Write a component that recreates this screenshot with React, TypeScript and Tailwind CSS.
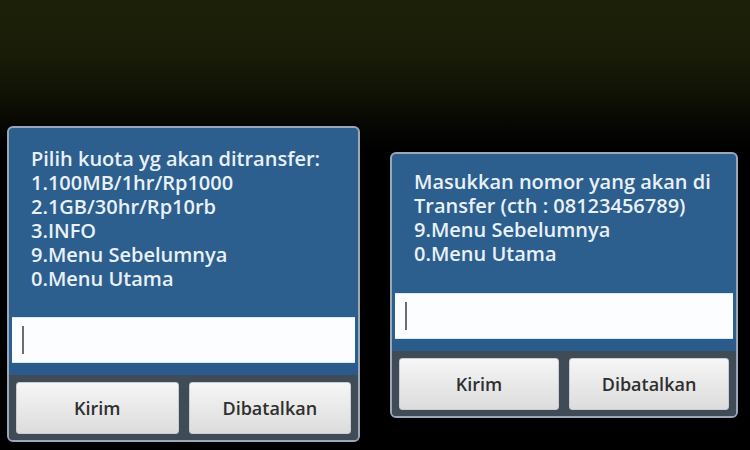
import React from "react";

type UssdDialogProps = {
  lines: string[];
  className?: string;
  textPadding: string;
  inputGap: string;
};

function UssdDialog({ lines, className, textPadding, inputGap }: UssdDialogProps) {
  return (
    <div
      className={`flex flex-col overflow-hidden rounded-[6px] border-2 border-[#9aa9ba] bg-[#2c5e8e] ${className ?? ""}`}
    >
      {/* message text */}
      <div className={`px-[22px] ${textPadding} ${inputGap} text-[20px] font-semibold leading-[24px] text-[#e9f1f8]`}>
        {lines.map((line) => (
          <div key={line} className="whitespace-nowrap">
            {line}
          </div>
        ))}
      </div>

      {/* reply field */}
      <div className="mx-[3px] flex h-[46px] items-center border-y border-[#cdeef5] bg-[#fbfdff] pl-[10px]">
        <span className="block h-[28px] w-[2px] bg-[#6a6e72]" />
      </div>
      <div className="h-[12px] bg-[#2a5b8a]" />

      {/* actions */}
      <div className="grid grid-cols-2 gap-[10px] bg-[#3f4b57] px-[7px] pb-[6px] pt-[7px]">
        {["Kirim", "Dibatalkan"].map((label) => (
          <button
            key={label}
            type="button"
            className="h-[52px] rounded-[3px] border border-[#c9ccd0] bg-gradient-to-b from-[#f6f6f6] to-[#dcdcdc] text-[18px] font-semibold text-[#2f2f2f]"
          >
            {label}
          </button>
        ))}
      </div>
    </div>
  );
}

export default function App() {
  return (
    <div
      className="flex h-[450px] w-[750px] items-start overflow-hidden bg-[linear-gradient(to_bottom,#1e2108_0%,#191c07_12%,#0f1104_22%,#060703_28%,#000_34%,#000_100%)]"
      style={{ fontFamily: '"Open Sans", "Noto Sans", sans-serif' }}
    >
      <UssdDialog
        className="ml-[7px] mt-[126px] w-[353px]"
        textPadding="pt-[19px]"
        inputGap="pb-[26px]"
        lines={[
          "Pilih kuota yg akan ditransfer:",
          "1.100MB/1hr/Rp1000",
          "2.1GB/30hr/Rp10rb",
          "3.INFO",
          "9.Menu Sebelumnya",
          "0.Menu Utama",
        ]}
      />
      <UssdDialog
        className="ml-[30px] mt-[152px] w-[348px]"
        textPadding="pt-[16px]"
        inputGap="pb-[27px]"
        lines={[
          "Masukkan nomor yang akan di",
          "Transfer (cth : 08123456789)",
          "9.Menu Sebelumnya",
          "0.Menu Utama",
        ]}
      />
    </div>
  );
}
